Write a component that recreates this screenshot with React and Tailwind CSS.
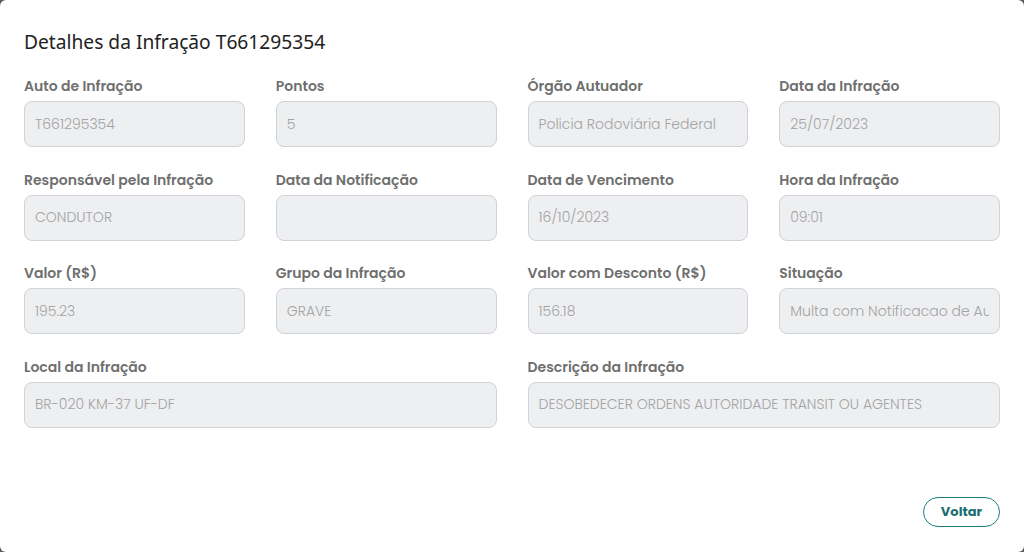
import React from "react";

const fields = [
  { label: "Auto de Infração", value: "T661295354" },
  { label: "Pontos", value: "5" },
  { label: "Órgão Autuador", value: "Policia Rodoviária Federal" },
  { label: "Data da Infração", value: "25/07/2023" },
  { label: "Responsável pela Infração", value: "CONDUTOR" },
  { label: "Data da Notificação", value: "" },
  { label: "Data de Vencimento", value: "16/10/2023" },
  { label: "Hora da Infração", value: "09:01" },
  { label: "Valor (R$)", value: "195.23" },
  { label: "Grupo da Infração", value: "GRAVE" },
  { label: "Valor com Desconto (R$)", value: "156.18" },
  { label: "Situação", value: "Multa com Notificacao de Autuacao" },
  { label: "Local da Infração", value: "BR-020 KM-37 UF-DF", wide: true },
  { label: "Descrição da Infração", value: "DESOBEDECER ORDENS AUTORIDADE TRANSIT OU AGENTES", wide: true },
];

function Field({ label, value, wide }) {
  return (
    <div className={wide ? "col-span-2 flex flex-col" : "flex flex-col"}>
      <label className="mb-[5px] text-[14px] leading-5 font-semibold text-[#6f6f6f]">{label}</label>
      <input
        disabled
        value={value}
        readOnly
        className="h-[46px] w-full rounded-lg border border-[#cfd2d6] bg-[#eeeff1] px-[10px] text-[14px] font-light text-[#a3a3a3] outline-none"
      />
    </div>
  );
}

export default function App() {
  return (
    <div className="h-[552px] w-[1024px] bg-[#5c5c5c]" style={{ fontFamily: "Poppins, 'Noto Sans', sans-serif" }}>
      <div className="flex h-full flex-col rounded-md bg-white px-6 pt-7 pb-[25px]">
        <h2 className="text-[19.2px] leading-7 text-[#222]" style={{ fontFamily: "'Noto Sans', sans-serif" }}>
          Detalhes da Infração T661295354
        </h2>
        <div className="mt-5 grid grid-cols-4 gap-x-[31px] gap-y-[22.5px]">
          {fields.map((f) => (
            <Field key={f.label} {...f} />
          ))}
        </div>
        <div className="mt-auto flex justify-end">
          <button className="h-[30px] w-[77px] rounded-full border border-[#1c7b7b] text-[13px] font-bold text-[#1c6f70]">
            Voltar
          </button>
        </div>
      </div>
    </div>
  );
}
